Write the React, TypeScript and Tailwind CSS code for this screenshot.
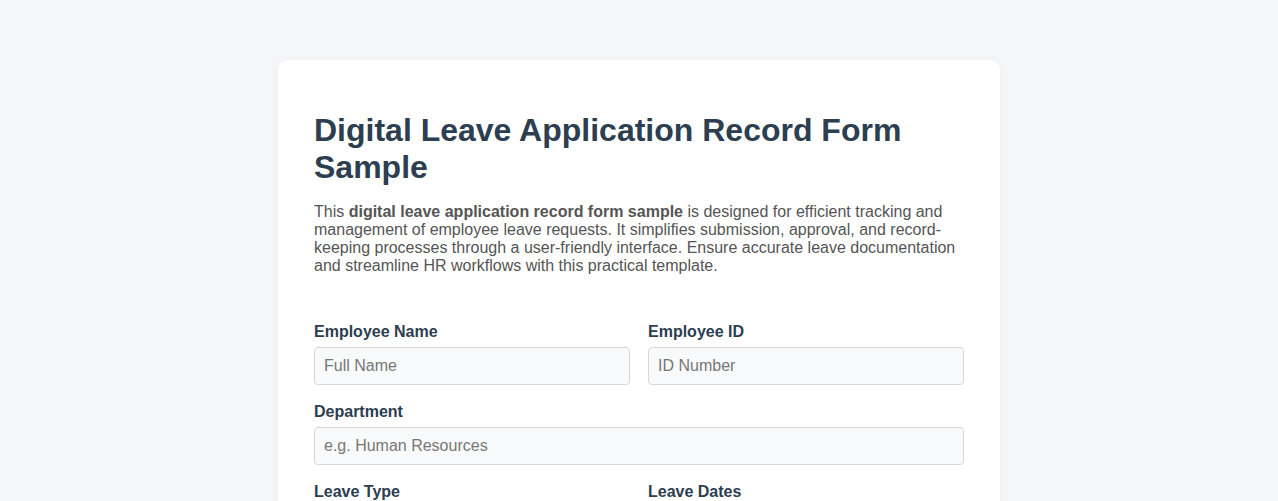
import React from "react";

const Field = ({ label, placeholder }: { label: string; placeholder: string }) => (
  <div className="flex flex-col gap-[6px]">
    <label className="text-[16px] font-bold leading-[18px] text-[#2c3e50]">{label}</label>
    <input
      type="text"
      placeholder={placeholder}
      className="h-[38px] w-full rounded-[4px] border border-[#d4d7dc] bg-[#f9fafb] px-[9px] text-[16px] text-[#333] placeholder:text-[#777]"
    />
  </div>
);

export default function App() {
  return (
    <div className="min-h-screen bg-[#f5f6f8] pt-[60px] font-['Liberation_Sans',Arial,sans-serif]">
      <div className="mx-auto w-[722px] rounded-[10px] bg-white px-[36px] pt-[52px] pb-10 shadow-[0_2px_10px_rgba(0,0,0,0.05)]">
        <h1 className="text-[32px] font-bold leading-[37px] text-[#2c3e50]">
          Digital Leave Application Record Form Sample
        </h1>
        <p className="mt-[17px] text-[16px] leading-[18px] text-[#555]">
          This <strong className="font-bold">digital leave application record form sample</strong> is designed for
          efficient tracking and management of employee leave requests. It simplifies submission, approval, and
          record-keeping processes through a user-friendly interface. Ensure accurate leave documentation and
          streamline HR workflows with this practical template.
        </p>

        <form className="mt-[48px] flex flex-col gap-[18px]">
          <div className="grid grid-cols-2 gap-[18px]">
            <Field label="Employee Name" placeholder="Full Name" />
            <Field label="Employee ID" placeholder="ID Number" />
          </div>
          <Field label="Department" placeholder="e.g. Human Resources" />
          <div className="grid grid-cols-2 gap-[18px]">
            <Field label="Leave Type" placeholder="Select type" />
            <Field label="Leave Dates" placeholder="Start - End" />
          </div>
        </form>
      </div>
    </div>
  );
}
